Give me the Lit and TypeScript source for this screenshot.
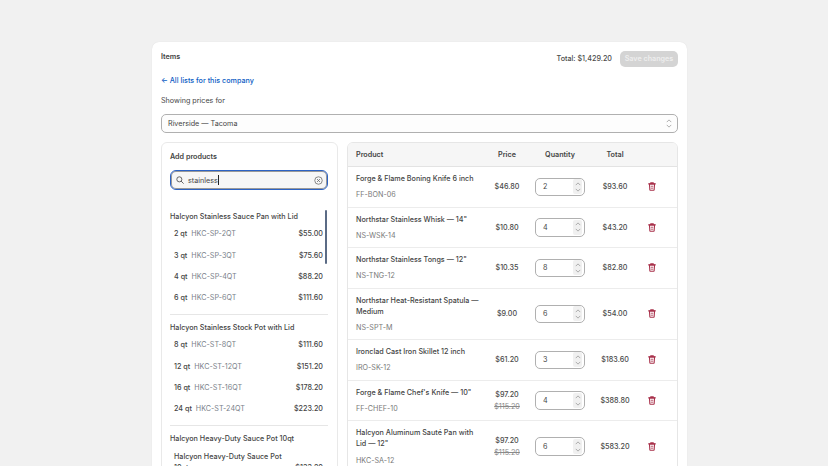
import { LitElement, html, css, svg } from "lit";
import { customElement } from "lit/decorators.js";

const groups = [
  { title: "Halcyon Stainless Sauce Pan with Lid", items: [
    ["2 qt", "HKC-SP-2QT", "$55.00"], ["3 qt", "HKC-SP-3QT", "$75.60"],
    ["4 qt", "HKC-SP-4QT", "$88.20"], ["6 qt", "HKC-SP-6QT", "$111.60"] ] },
  { title: "Halcyon Stainless Stock Pot with Lid", items: [
    ["8 qt", "HKC-ST-8QT", "$111.60"], ["12 qt", "HKC-ST-12QT", "$151.20"],
    ["16 qt", "HKC-ST-16QT", "$178.20"], ["24 qt", "HKC-ST-24QT", "$223.20"] ] },
];

const rows = [
  { name: "Forge & Flame Boning Knife 6 inch", sku: "FF-BON-06", price: "$46.80", qty: 2, total: "$93.60" },
  { name: "Northstar Stainless Whisk — 14\"", sku: "NS-WSK-14", price: "$10.80", qty: 4, total: "$43.20" },
  { name: "Northstar Stainless Tongs — 12\"", sku: "NS-TNG-12", price: "$10.35", qty: 8, total: "$82.80" },
  { name: "Northstar Heat-Resistant Spatula — Medium", sku: "NS-SPT-M", price: "$9.00", qty: 6, total: "$54.00" },
  { name: "Ironclad Cast Iron Skillet 12 inch", sku: "IRO-SK-12", price: "$61.20", qty: 3, total: "$183.60" },
  { name: "Forge & Flame Chef's Knife — 10\"", sku: "FF-CHEF-10", price: "$97.20", old: "$115.20", qty: 4, total: "$388.80" },
  { name: "Halcyon Aluminum Sauté Pan with Lid — 12\"", sku: "HKC-SA-12", price: "$97.20", old: "$115.20", qty: 6, total: "$583.20" },
];

const trash = svg`<svg class="trash" viewBox="0 0 10 11" width="8" height="9" fill="none" stroke="#a8304a" stroke-width="1.3">
  <path d="M3.5 1.6V.8h3v.8M.8 2.2h8.4" stroke-linecap="round"/>
  <path d="M1.8 2.4l.5 7.3c0 .3.2.5.5.5h4.4c.3 0 .5-.2.5-.5l.5-7.3z"/>
  <path d="M3.4 5.2h3.2M3.4 7.6h3.2" stroke-width="1"/>
</svg>`;

const chevUp = svg`<svg viewBox="0 0 8 5" width="6" height="4" fill="none" stroke="#8a8a8a" stroke-width="0.9"><path d="M1 4l3-3 3 3"/></svg>`;
const chevDown = svg`<svg viewBox="0 0 8 5" width="6" height="4" fill="none" stroke="#8a8a8a" stroke-width="0.9"><path d="M1 1l3 3 3-3"/></svg>`;

@customElement("app-root")
export class AppRoot extends LitElement {
  static styles = css`
    :host { display: block; height: 466px; overflow: hidden; background: #f1f1f1;
      font-family: Inter, "Liberation Sans", sans-serif; font-size: 7.2px; color: #444444; }
    * { box-sizing: border-box; }
    .page { padding: 42px 141px 0 152px; }
    .card { background: #fff; border-radius: 7px 7px 0 0; padding: 9px; height: 424px; overflow: hidden;
      box-shadow: 0 0 1px rgba(0,0,0,.12); }
    .top { display: flex; justify-content: space-between; align-items: flex-start; height: 22px; }
    .items { font-weight: 600; line-height: 10px; margin-top: 1px; }
    .top-right { display: flex; align-items: center; gap: 8px; }
    .sum { font-weight: 500; color: #4a4a4a; margin-bottom: 1px; }
    .save { width: 58px; height: 15.5px; border-radius: 5px; background: #d4d4d4; color: #eeeeee;
      font-weight: 600; display: flex; align-items: center; justify-content: center; }
    .back { color: #0b5cc4; font-weight: 500; margin-top: 2px; line-height: 11px; }
    .for { margin-top: 9px; line-height: 11px; color: #454545; }
    .select { margin-top: 8px; height: 19px; border: 1px solid #b0b0b0; border-radius: 5px; background: #fdfdfd;
      display: flex; align-items: center; justify-content: space-between; padding: 0 5px 0 6px; }
    .cols { display: flex; gap: 9px; align-items: flex-start; margin-top: 9px; }
    .left { width: 177px; flex: none; height: 340px; border: 1px solid #e9e9e9; border-radius: 6px; padding: 8px 9px 0 8px;
      position: relative; overflow: hidden; }
    .add { font-weight: 600; line-height: 11px; }
    .search { margin-top: 8px; height: 20px; border: 1.5px solid #2c62c4; border-radius: 6px; background: #f6f6f6;
      display: flex; align-items: center; padding: 0 4px 0 5px; gap: 4px; box-shadow: inset 0 0 0 1px #999; }
    .term { flex: 1; display: flex; align-items: center; }
    .caret { width: 1px; height: 10px; background: #222; }
    .list { margin-top: 21px; }
    .gtitle { font-weight: 500; line-height: 11px; }
    .irows { margin-top: 1px; }
    .irow { display: flex; align-items: center; height: 21.4px; padding: 0 5px 0 4px; gap: 4px; font-weight: 500; }
    .isku { color: #7a7f8a; font-weight: 400; flex: 1; }
    .sep { height: 1px; background: #e6e6e6; margin: 5.5px 0 7px; }
    .wrapname { padding: 0 5px 0 4px; margin-top: 6.5px; display: flex; justify-content: space-between; align-items: flex-start; line-height: 11px; font-weight: 500; }
    .wrapname span:first-child { width: 125px; }
    .wrapname span:last-child { margin-top: 11px; }
    .thumb { position: absolute; right: 10px; top: 67px; width: 2px; height: 54px; background: #5b6b85; border-radius: 1px; }
    .table { flex: 1; min-width: 0; border: 1px solid #e6e6e6; border-radius: 6px; overflow: hidden; }
    .tr { display: grid; grid-template-columns: 128px 46px 60px 50px 1fr; align-items: center; padding-left: 8px;
      border-bottom: 1px solid #ececec; }
    .thead { height: 24px; background: #f6f6f6; font-weight: 600; border-bottom: 1px solid #e3e3e3; }
    .c { text-align: center; display: flex; flex-direction: column; align-items: center; }
    .row { min-height: 40.5px; padding-top: 6px; padding-bottom: 6px; }
    .name { line-height: 11.3px; font-weight: 500; }
    .sku { margin-top: 5px; line-height: 11px; color: #7a7a7a; }
    .price { color: #4a4a4a; font-weight: 500; line-height: 13px; }
    .old { color: #8a8a8a; text-decoration: line-through; line-height: 12px; }
    .qty { width: 50px; height: 18.5px; border: 1px solid #b0b0b0; border-radius: 5px; background: #fff;
      display: flex; align-items: center; justify-content: space-between; padding: 0 2px 0 7px; justify-self: center; }
    .step { width: 9px; height: 15px; background: #f0f0f0; border-radius: 2px; display: flex; flex-direction: column;
      align-items: center; justify-content: space-evenly; }
    .step svg, .selchev svg { display: block; }
    .selchev { display: flex; flex-direction: column; gap: 1px; }
    .trash { display: block; }
    .del { padding-left: 8px; }
  `;

  render() {
    return html`<div class="page"><div class="card">
      <div class="top">
        <div class="items">Items</div>
        <div class="top-right"><div class="sum">Total: $1,429.20</div><div class="save">Save changes</div></div>
      </div>
      <div class="back">← All lists for this company</div>
      <div class="for">Showing prices for</div>
      <div class="select"><span>Riverside — Tacoma</span><span class="selchev">${chevUp}${chevDown}</span></div>
      <div class="cols">
        <div class="left">
          <div class="add">Add products</div>
          <div class="search">
            <svg viewBox="0 0 12 12" width="8" height="8" fill="none" stroke="#444" stroke-width="1.2"><circle cx="5" cy="5" r="3.8"/><path d="M8 8l3 3" stroke-linecap="round"/></svg>
            <div class="term">stainless<span class="caret"></span></div>
            <svg viewBox="0 0 12 12" width="9" height="9" fill="none" stroke="#666" stroke-width="1"><circle cx="6" cy="6" r="5"/><path d="M4 4l4 4M8 4l-4 4"/></svg>
          </div>
          <div class="list">
            ${groups.map((g) => html`
              <div class="gtitle">${g.title}</div>
              <div class="irows">${g.items.map((i) => html`<div class="irow"><span>${i[0]}</span><span class="isku">${i[1]}</span><span>${i[2]}</span></div>`)}</div>
              <div class="sep"></div>`)}
            <div class="gtitle">Halcyon Heavy-Duty Sauce Pot 10qt</div>
            <div class="wrapname"><span>Halcyon Heavy-Duty Sauce Pot 10qt</span><span>$133.20</span></div>
          </div>
          <div class="thumb"></div>
        </div>
        <div class="table">
          <div class="tr thead"><div>Product</div><div class="c">Price</div><div class="c">Quantity</div><div class="c">Total</div><div></div></div>
          ${rows.map((r) => html`<div class="tr row">
            <div><div class="name">${r.name}</div><div class="sku">${r.sku}</div></div>
            <div class="c"><div class="price">${r.price}</div>${r.old ? html`<div class="old">${r.old}</div>` : ""}</div>
            <div class="qty"><span>${r.qty}</span><span class="step">${chevUp}${chevDown}</span></div>
            <div class="c price">${r.total}</div>
            <div class="del">${trash}</div>
          </div>`)}
        </div>
      </div>
    </div></div>`;
  }
}
